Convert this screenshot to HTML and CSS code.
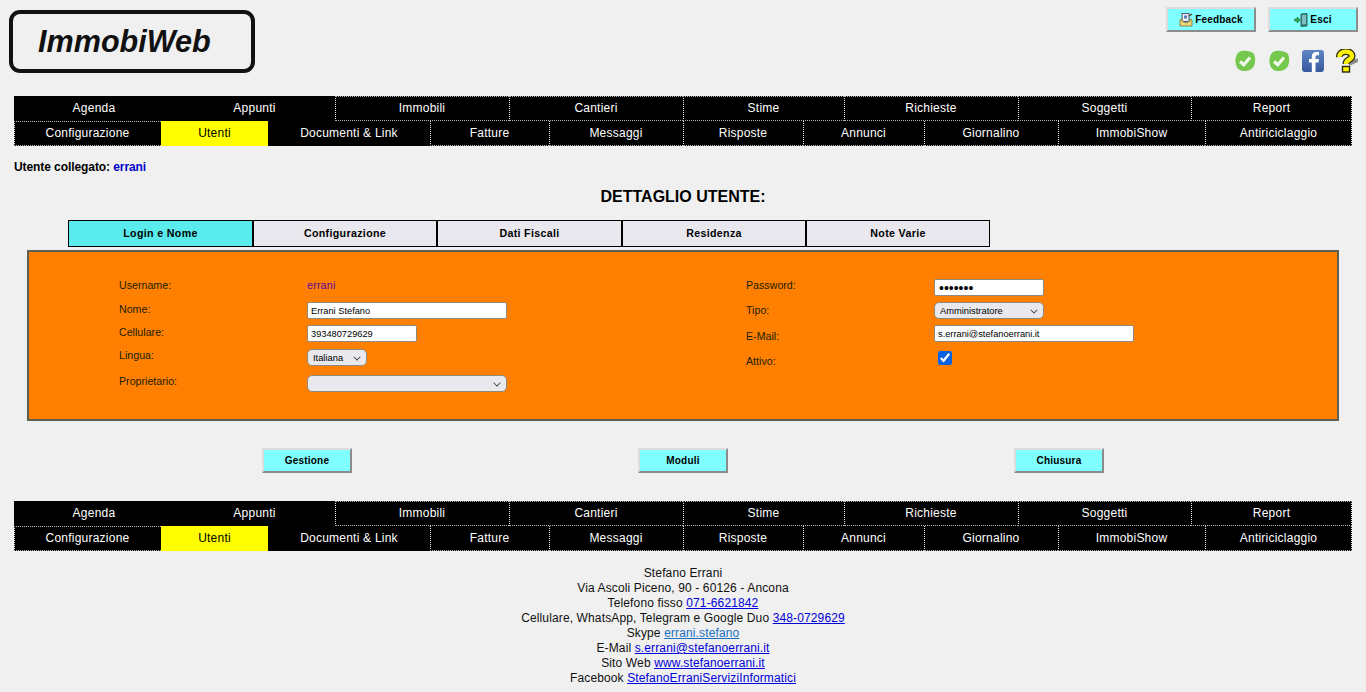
FILE: index.html
```html
<!DOCTYPE html>
<html lang="it">
<head>
<meta charset="utf-8">
<title>ImmobiWeb - Dettaglio utente</title>
<link rel="stylesheet" href="styles.css">
</head>
<body>
<header class="header">
  <div class="logo"><span class="logo-text">ImmobiWeb</span></div>
  <div class="header-right">
    <div class="top-buttons">
      <button class="btn" type="button">
        <svg class="btn-icon" viewBox="0 0 14 14" width="14" height="14"><rect x="3" y="0.5" width="7" height="8" fill="#e8ecf6" stroke="#4a5a78"/><rect x="5" y="2.5" width="3" height="3" fill="#5a7ab0"/><path d="M1 7 L3 5.5 V8 L7 10 L11 8 V5.5 L13 7 V13 H1 Z" fill="#f0d878" stroke="#7a6a30" stroke-width="0.8"/><path d="M10 3 L13 1" stroke="#5a4020" stroke-width="1.5"/></svg>
        Feedback
      </button>
      <button class="btn" type="button">
        <svg class="btn-icon" viewBox="0 0 14 14" width="14" height="14"><path d="M7 1 L13 0.5 V13 L7 13.5 Z" fill="#3f8a8a" stroke="#1f4a4a" stroke-width="0.8"/><rect x="8" y="2" width="4" height="9" fill="#7fc0c0"/><path d="M0.5 6 H3 V4 L6.5 7 L3 10 V8 H0.5 Z" fill="#2aa84a" stroke="#146028" stroke-width="0.5"/></svg>
        Esci
      </button>
    </div>
    <div class="status-icons">
      <svg viewBox="0 0 22 22" width="22" height="22"><path d="M5 2 C9 0 16 0.5 19.5 3.5 C22 7 21.5 14 19 17.5 C15.5 21.5 9 22 5 19.5 C1 17 -0.5 6.5 5 2 Z" fill="#74c84c"/><path d="M6 11.5 L9.8 14.8 L16 7.5" fill="none" stroke="#f2f7ec" stroke-width="3.2"/></svg>
      <svg viewBox="0 0 22 22" width="22" height="22"><path d="M5 2 C9 0 16 0.5 19.5 3.5 C22 7 21.5 14 19 17.5 C15.5 21.5 9 22 5 19.5 C1 17 -0.5 6.5 5 2 Z" fill="#74c84c"/><path d="M6 11.5 L9.8 14.8 L16 7.5" fill="none" stroke="#f2f7ec" stroke-width="3.2"/></svg>
      <svg viewBox="0 0 22 22" width="22" height="22"><defs><linearGradient id="fbg" x1="0" y1="0" x2="0" y2="1"><stop offset="0" stop-color="#5f86c4"/><stop offset="1" stop-color="#37599f"/></linearGradient></defs><rect width="22" height="22" rx="3" fill="url(#fbg)"/><path d="M13.5 22 V12.5 H16.5 L17 9 H13.5 V7 C13.5 5.8 14 5.2 15.2 5.2 H17 V2 H14.5 C11.5 2 9.8 3.8 9.8 6.6 V9 H7 V12.5 H9.8 V22 Z" fill="#fff"/></svg>
      <svg viewBox="2 0 22 24" width="22" height="24"><path d="M15 11 L24 9.5 L24 13 L15 17 Z" fill="#8c8c8c"/><path d="M5.5 8 C5 1 18 1 18 7 C18 11 12 10 12 15" fill="none" stroke="#2a2a10" stroke-width="7"/><path d="M5.5 8 C5 1 18 1 18 7 C18 11 12 10 12 15" fill="none" stroke="#fff200" stroke-width="4.4"/><rect x="8.5" y="17.5" width="7" height="5.5" fill="#fff200" stroke="#2a2a10" stroke-width="1.4"/></svg>
    </div>
  </div>
</header>

<nav class="nav">
  <div class="nav-row nav-primary">
    <a class="nav-cell plain">Agenda</a>
    <a class="nav-cell plain">Appunti</a>
    <a class="nav-cell dotted">Immobili</a>
    <a class="nav-cell dotted">Cantieri</a>
    <a class="nav-cell dotted">Stime</a>
    <a class="nav-cell dotted">Richieste</a>
    <a class="nav-cell dotted">Soggetti</a>
    <a class="nav-cell dotted">Report</a>
  </div>
  <div class="nav-row nav-secondary">
    <a class="nav-cell dotted">Configurazione</a>
    <a class="nav-cell current">Utenti</a>
    <a class="nav-cell plain">Documenti &amp; Link</a>
    <a class="nav-cell dotted">Fatture</a>
    <a class="nav-cell dotted">Messaggi</a>
    <a class="nav-cell dotted">Risposte</a>
    <a class="nav-cell dotted">Annunci</a>
    <a class="nav-cell dotted">Giornalino</a>
    <a class="nav-cell dotted">ImmobiShow</a>
    <a class="nav-cell dotted">Antiriciclaggio</a>
  </div>
</nav>

<p class="logged">Utente collegato: <span class="logged-name">errani</span></p>
<h1 class="title">DETTAGLIO UTENTE:</h1>

<div class="tabs">
  <div class="tab active">Login e Nome</div>
  <div class="tab">Configurazione</div>
  <div class="tab">Dati Fiscali</div>
  <div class="tab">Residenza</div>
  <div class="tab">Note Varie</div>
</div>

<form class="panel">
  <div class="panel-col">
    <div class="row h23"><label class="lbl">Username:</label><span class="value">errani</span></div>
    <div class="row h23"><label class="lbl o1">Nome:</label><input class="inp wide" type="text" value="Errani Stefano"></div>
    <div class="row h24"><label class="lbl o1">Cellulare:</label><input class="inp short" type="text" value="393480729629"></div>
    <div class="row h26"><label class="lbl">Lingua:</label><span class="sel-wrap lang"><select class="sel"><option>Italiana</option></select></span></div>
    <div class="row"><label class="lbl">Proprietario:</label><span class="sel-wrap wide"><select class="sel"><option></option></select></span></div>
  </div>
  <div class="panel-col">
    <div class="row h23"><label class="lbl">Password:</label><input class="inp short pass" type="password" value="1234567"></div>
    <div class="row h23"><label class="lbl o2">Tipo:</label><span class="sel-wrap short"><select class="sel"><option>Amministratore</option></select></span></div>
    <div class="row h27"><label class="lbl o5">E-Mail:</label><input class="inp wide" type="text" value="s.errani@stefanoerrani.it"></div>
    <div class="row"><label class="lbl o3">Attivo:</label><input class="chk" type="checkbox" checked></div>
  </div>
</form>

<div class="actions">
  <button class="btn" type="button">Gestione</button>
  <button class="btn" type="button">Moduli</button>
  <button class="btn" type="button">Chiusura</button>
</div>

<nav class="nav">
  <div class="nav-row nav-primary">
    <a class="nav-cell plain">Agenda</a>
    <a class="nav-cell plain">Appunti</a>
    <a class="nav-cell dotted">Immobili</a>
    <a class="nav-cell dotted">Cantieri</a>
    <a class="nav-cell dotted">Stime</a>
    <a class="nav-cell dotted">Richieste</a>
    <a class="nav-cell dotted">Soggetti</a>
    <a class="nav-cell dotted">Report</a>
  </div>
  <div class="nav-row nav-secondary">
    <a class="nav-cell dotted">Configurazione</a>
    <a class="nav-cell current">Utenti</a>
    <a class="nav-cell plain">Documenti &amp; Link</a>
    <a class="nav-cell dotted">Fatture</a>
    <a class="nav-cell dotted">Messaggi</a>
    <a class="nav-cell dotted">Risposte</a>
    <a class="nav-cell dotted">Annunci</a>
    <a class="nav-cell dotted">Giornalino</a>
    <a class="nav-cell dotted">ImmobiShow</a>
    <a class="nav-cell dotted">Antiriciclaggio</a>
  </div>
</nav>

<footer class="footer">
  <div>Stefano Errani</div>
  <div>Via Ascoli Piceno, 90 - 60126 - Ancona</div>
  <div>Telefono fisso <a href="#">071-6621842</a></div>
  <div>Cellulare, WhatsApp, Telegram e Google Duo <a href="#">348-0729629</a></div>
  <div>Skype <a class="skype" href="#">errani.stefano</a></div>
  <div>E-Mail <a href="#">s.errani@stefanoerrani.it</a></div>
  <div>Sito Web <a href="#">www.stefanoerrani.it</a></div>
  <div>Facebook <a href="#">StefanoErraniServiziInformatici</a></div>
</footer>
</body>
</html>
```
FILE: styles.css
```css
* { box-sizing: border-box; }
html, body { margin: 0; padding: 0; }
body {
  background: #f0f0f0;
  color: #000;
  font-family: "Liberation Sans", Arial, sans-serif;
  font-size: 12px;
  overflow: hidden;
}
.header {
  height: 96px;
  display: flex;
  justify-content: space-between;
  padding: 7px 8px 0 9px;
}
.logo {
  width: 246px;
  height: 63px;
  margin-top: 3px;
  border: 4px solid #111;
  border-radius: 11px;
  display: flex;
  align-items: center;
  padding: 0 0 1px 25px;
}
.logo-text {
  font-size: 30.6px;
  font-weight: bold;
  font-style: italic;
  color: #111;
}
.header-right {
  display: flex;
  flex-direction: column;
  align-items: flex-end;
}
.top-buttons {
  display: flex;
  gap: 12px;
}
.status-icons {
  display: flex;
  align-items: center;
  gap: 12px;
  margin-top: 17px;
}
.btn {
  width: 90px;
  height: 25px;
  padding: 0;
  background: #7fffff;
  border-style: solid;
  border-width: 2px;
  border-color: #dcdcdc #8c8c8c #8c8c8c #dcdcdc;
  font-family: "Liberation Sans", Arial, sans-serif;
  font-size: 10px;
  font-weight: bold;
  letter-spacing: 0.2px;
  color: #000;
  display: inline-flex;
  align-items: center;
  justify-content: center;
  gap: 2px;
}
.nav {
  margin: 0 14px;
}
.nav-row {
  display: grid;
  height: 25px;
  background: #000;
}
.nav-primary { grid-template-columns: 160px 161px 174px 174px 161px 174px 173px 161px; }
.nav-secondary { grid-template-columns: 147px 107px 162px 119px 134px 120px 121px 134px 147px 147px; }
.nav-cell {
  display: flex;
  align-items: center;
  justify-content: center;
  color: #fff;
  font-size: 12px;
  letter-spacing: 0.23px;
  padding-bottom: 1px;
}
.dotted {
  border-left: 1px dotted #e8e8e8;
  border-bottom: 1px dotted #b8b8b8;
  padding-right: 1px;
}
.nav-primary .dotted { border-top: 1px dotted #b8b8b8; padding-bottom: 2px; }
.nav-secondary .dotted:first-child { border-top: 1px dotted #b8b8b8; padding-bottom: 2px; }
.nav-row .dotted:last-child { border-right: 1px dotted #e8e8e8; padding-right: 0; }
.current { background: #ff0; color: #000; }
.logged {
  margin: 14px 0 0 14px;
  font-weight: bold;
  line-height: 14px;
  letter-spacing: -0.08px;
}
.logged-name { color: #0000c8; }
.title {
  margin: 14px 0 0;
  font-size: 16px;
  line-height: 18px;
  font-weight: bold;
  text-align: center;
}
.tabs {
  display: grid;
  grid-template-columns: 185px 184px 185px 184px 184px;
  width: 922px;
  margin: 14px 0 0 68px;
}
.tab {
  height: 27px;
  display: flex;
  align-items: center;
  justify-content: center;
  border: 1px solid #000;
  background: #e8e8ee;
  font-size: 10.67px;
  font-weight: bold;
  letter-spacing: 0.33px;
  padding-bottom: 1px;
}
.active { background: #5aecec; }
.panel {
  display: grid;
  grid-template-columns: 627px 1fr;
  height: 171px;
  margin: 3px 27px 0;
  padding: 27px 0 0 90px;
  background: #ff8000;
  border: 2px solid #5f5f50;
  font-size: 10.67px;
}
.row {
  display: flex;
  align-items: flex-start;
}
.h23 { height: 23px; }
.h24 { height: 24px; }
.h26 { height: 26px; }
.h27 { height: 27px; }
.lbl {
  width: 188px;
  line-height: 12px;
  color: #202000;
}
.o1 { margin-top: 1px; }
.o2 { margin-top: 2px; }
.o3 { margin-top: 3px; }
.o5 { margin-top: 5px; }
.value {
  color: #5a00a0;
  line-height: 12px;
  letter-spacing: 0.2px;
}
.inp {
  height: 17px;
  margin: 0;
  padding: 1px 3px;
  border: 1px solid #8f8a80;
  border-radius: 2px;
  background: #fff;
  color: #000;
  font-family: "Liberation Sans", Arial, sans-serif;
  font-size: 9.25px;
}
.pass { font-size: 14px; padding: 0 4px; }
.sel-wrap {
  display: block;
  position: relative;
  height: 17px;
}
.sel-wrap::after {
  content: "";
  position: absolute;
  right: 7px;
  top: 5px;
  width: 5px;
  height: 5px;
  border-right: 1.4px solid #333;
  border-bottom: 1.4px solid #333;
  transform: rotate(45deg) scale(0.85);
  pointer-events: none;
}
.sel {
  appearance: none;
  display: block;
  width: 100%;
  height: 17px;
  margin: 0;
  padding: 0 0 0 5px;
  border: 1px solid #8f8a80;
  border-radius: 5px;
  background: #e9e9ed;
  color: #000;
  font-family: "Liberation Sans", Arial, sans-serif;
  font-size: 9.33px;
}
.wide { width: 200px; }
.short { width: 110px; }
.lang { width: 60px; }
.chk {
  width: 14px;
  height: 14px;
  margin: -1px 0 0 4px;
  accent-color: #0b62e0;
}
.actions {
  display: grid;
  grid-template-columns: repeat(3, 376px);
  justify-content: center;
  justify-items: center;
  margin-top: 27px;
}
.actions + .nav { margin-top: 28px; }
.footer {
  margin-top: 15px;
  text-align: center;
  line-height: 15px;
  color: #111;
  letter-spacing: 0.13px;
}
.footer a { color: #0000d8; }
.footer a.skype { color: #1a6fc0; }
```
